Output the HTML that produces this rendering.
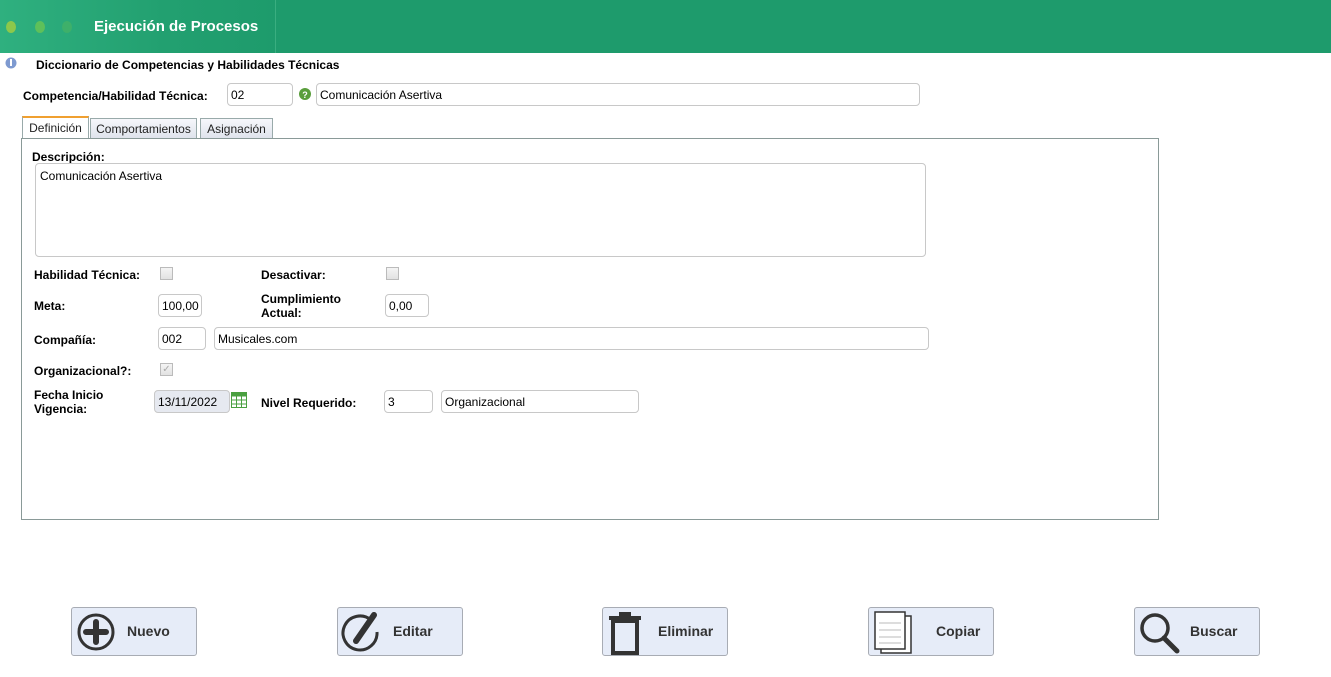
<!DOCTYPE html>
<html><head><meta charset="utf-8">
<style>
*{box-sizing:border-box}
body{margin:0;width:1331px;height:677px;background:#fff;font-family:"Liberation Sans",sans-serif;font-size:12px;color:#000;position:relative;overflow:hidden}
.a{position:absolute}
.hdr{left:0;top:0;width:1331px;height:53px;background:#1e9b6c}
.hl{left:0;top:0;width:276px;height:53px;background:linear-gradient(90deg,#2fb07f 0%,#22a070 60%,#1e9b6c 100%);border-right:1px solid #3aae80}
.dot{width:10px;height:12px;border-radius:50%;top:21px}
.lbl{font-weight:bold;font-size:12px}
.inp{border:1px solid #c8c8c8;border-radius:4px;background:#fff;height:23px;padding:4px 3px;font-size:12px;line-height:14px}
.cb{width:13px;height:13px;border:1px solid #bbb;background:linear-gradient(#f4f4f4,#e2e2e2)}
.tab{top:118px;height:20px;border:1px solid #9aa;border-bottom:none;background:linear-gradient(#f6f7fb,#dfe3ec);font-size:12px;padding:3px 0;text-align:center;color:#222;white-space:nowrap;overflow:hidden}
.btn{top:607px;width:126px;height:49px;border:1px solid #a8acb4;border-radius:3px;background:#e6ecf8;font-weight:bold;font-size:14px;color:#333}
.btn span{position:absolute;top:15px}
</style></head><body>
<div class="a hdr"></div>
<div class="a hl"></div>
<div class="a dot" style="left:6px;background:#8cc84b"></div>
<div class="a dot" style="left:35px;background:#5ec05a"></div>
<div class="a dot" style="left:62px;background:#3eb06a"></div>
<div class="a" style="left:94px;top:18px;color:#fff;font-weight:bold;font-size:15px">Ejecución de Procesos</div>

<svg class="a" style="left:4px;top:57px" width="14" height="12"><circle cx="7" cy="6" r="5.5" fill="#7e9ad0"/><rect x="6" y="2" width="2" height="7" fill="#fff"/></svg>
<div class="a lbl" style="left:36px;top:58px">Diccionario de Competencias y Habilidades Técnicas</div>

<div class="a lbl" style="left:23px;top:89px;font-size:12px">Competencia/Habilidad Técnica:</div>
<div class="a inp" style="left:227px;top:83px;width:66px">02</div>
<svg class="a" style="left:298px;top:87px" width="14" height="14"><circle cx="7" cy="7" r="6" fill="#5a9e3c"/><text x="7" y="11" font-size="9" fill="#fff" text-anchor="middle" font-family="Liberation Sans" font-weight="bold">?</text></svg>
<div class="a inp" style="left:316px;top:83px;width:604px">Comunicación Asertiva</div>

<div class="a tab" style="left:22px;width:67px;background:#fff;border-top:2px solid #f0a030;top:116px;height:23px">Definición</div>
<div class="a tab" style="left:90px;width:107px">Comportamientos</div>
<div class="a tab" style="left:200px;width:73px">Asignación</div>
<div class="a" style="left:21px;top:138px;width:1138px;height:382px;border:1px solid #8a9a98"></div>

<div class="a lbl" style="left:32px;top:150px">Descripción:</div>
<div class="a" style="left:35px;top:163px;width:891px;height:94px;border:1px solid #c8c8c8;border-radius:4px;padding:5px 4px;font-size:12px">Comunicación Asertiva</div>

<div class="a lbl" style="left:34px;top:268px">Habilidad Técnica:</div>
<div class="a cb" style="left:160px;top:267px"></div>
<div class="a lbl" style="left:261px;top:268px">Desactivar:</div>
<div class="a cb" style="left:386px;top:267px"></div>

<div class="a lbl" style="left:34px;top:299px">Meta:</div>
<div class="a inp" style="left:158px;top:294px;width:44px">100,00</div>
<div class="a lbl" style="left:261px;top:292px;line-height:14px">Cumplimiento<br>Actual:</div>
<div class="a inp" style="left:385px;top:294px;width:44px">0,00</div>

<div class="a lbl" style="left:34px;top:333px">Compañía:</div>
<div class="a inp" style="left:158px;top:327px;width:48px">002</div>
<div class="a inp" style="left:214px;top:327px;width:715px">Musicales.com</div>

<div class="a lbl" style="left:34px;top:364px">Organizacional?:</div>
<div class="a cb" style="left:160px;top:363px;font-size:10px;color:#aaa;line-height:11px;text-align:center">✓</div>

<div class="a lbl" style="left:34px;top:388px;line-height:14px">Fecha Inicio<br>Vigencia:</div>
<div class="a inp" style="left:154px;top:390px;width:76px;background:#e6e9f0">13/11/2022</div>
<svg class="a" style="left:231px;top:392px" width="16" height="16"><rect x="0.5" y="0.5" width="15" height="15" fill="#fff" stroke="#4aa040"/><rect x="0.5" y="0.5" width="15" height="4" fill="#4aa040"/><path d="M5.5 4v11M10.5 4v11M1 8h14M1 12h14" stroke="#4aa040"/></svg>
<div class="a lbl" style="left:261px;top:396px">Nivel Requerido:</div>
<div class="a inp" style="left:384px;top:390px;width:49px">3</div>
<div class="a inp" style="left:441px;top:390px;width:198px">Organizacional</div>

<div class="a btn" style="left:71px"><svg class="a" style="left:4px;top:5px" width="40" height="40"><circle cx="20" cy="19" r="17" fill="none" stroke="#333" stroke-width="3"/><path d="M20 9v20M10 19h20" stroke="#333" stroke-width="6" stroke-linecap="round"/></svg><span style="left:55px">Nuevo</span></div>
<div class="a btn" style="left:337px"><svg class="a" style="left:3px;top:4px" width="42" height="42"><path d="M30 8A17 17 0 1 0 36 20" fill="none" stroke="#333" stroke-width="3"/><path d="M33 3L15 29" stroke="#333" stroke-width="6" stroke-linecap="round"/></svg><span style="left:55px">Editar</span></div>
<div class="a btn" style="left:602px"><svg class="a" style="left:4px;top:3px" width="40" height="44"><rect x="2" y="5" width="32" height="4" fill="#333"/><rect x="12" y="1" width="12" height="5" fill="#333"/><rect x="6" y="10" width="24" height="32" fill="none" stroke="#333" stroke-width="4"/></svg><span style="left:55px">Eliminar</span></div>
<div class="a btn" style="left:868px"><svg class="a" style="left:3px;top:3px" width="44" height="44"><rect x="9" y="5" width="30" height="37" fill="#fff" stroke="#333" stroke-width="1.5"/><rect x="3" y="1" width="30" height="37" fill="#fff" stroke="#333" stroke-width="1.5"/><path d="M7 12h22M7 19h22M7 26h22M7 32h22" stroke="#bbb"/></svg><span style="left:67px">Copiar</span></div>
<div class="a btn" style="left:1134px"><svg class="a" style="left:3px;top:3px" width="44" height="44"><circle cx="17" cy="17" r="13" fill="none" stroke="#333" stroke-width="3.5"/><path d="M26 27l13 13" stroke="#333" stroke-width="5" stroke-linecap="round"/></svg><span style="left:55px">Buscar</span></div>
</body></html>
